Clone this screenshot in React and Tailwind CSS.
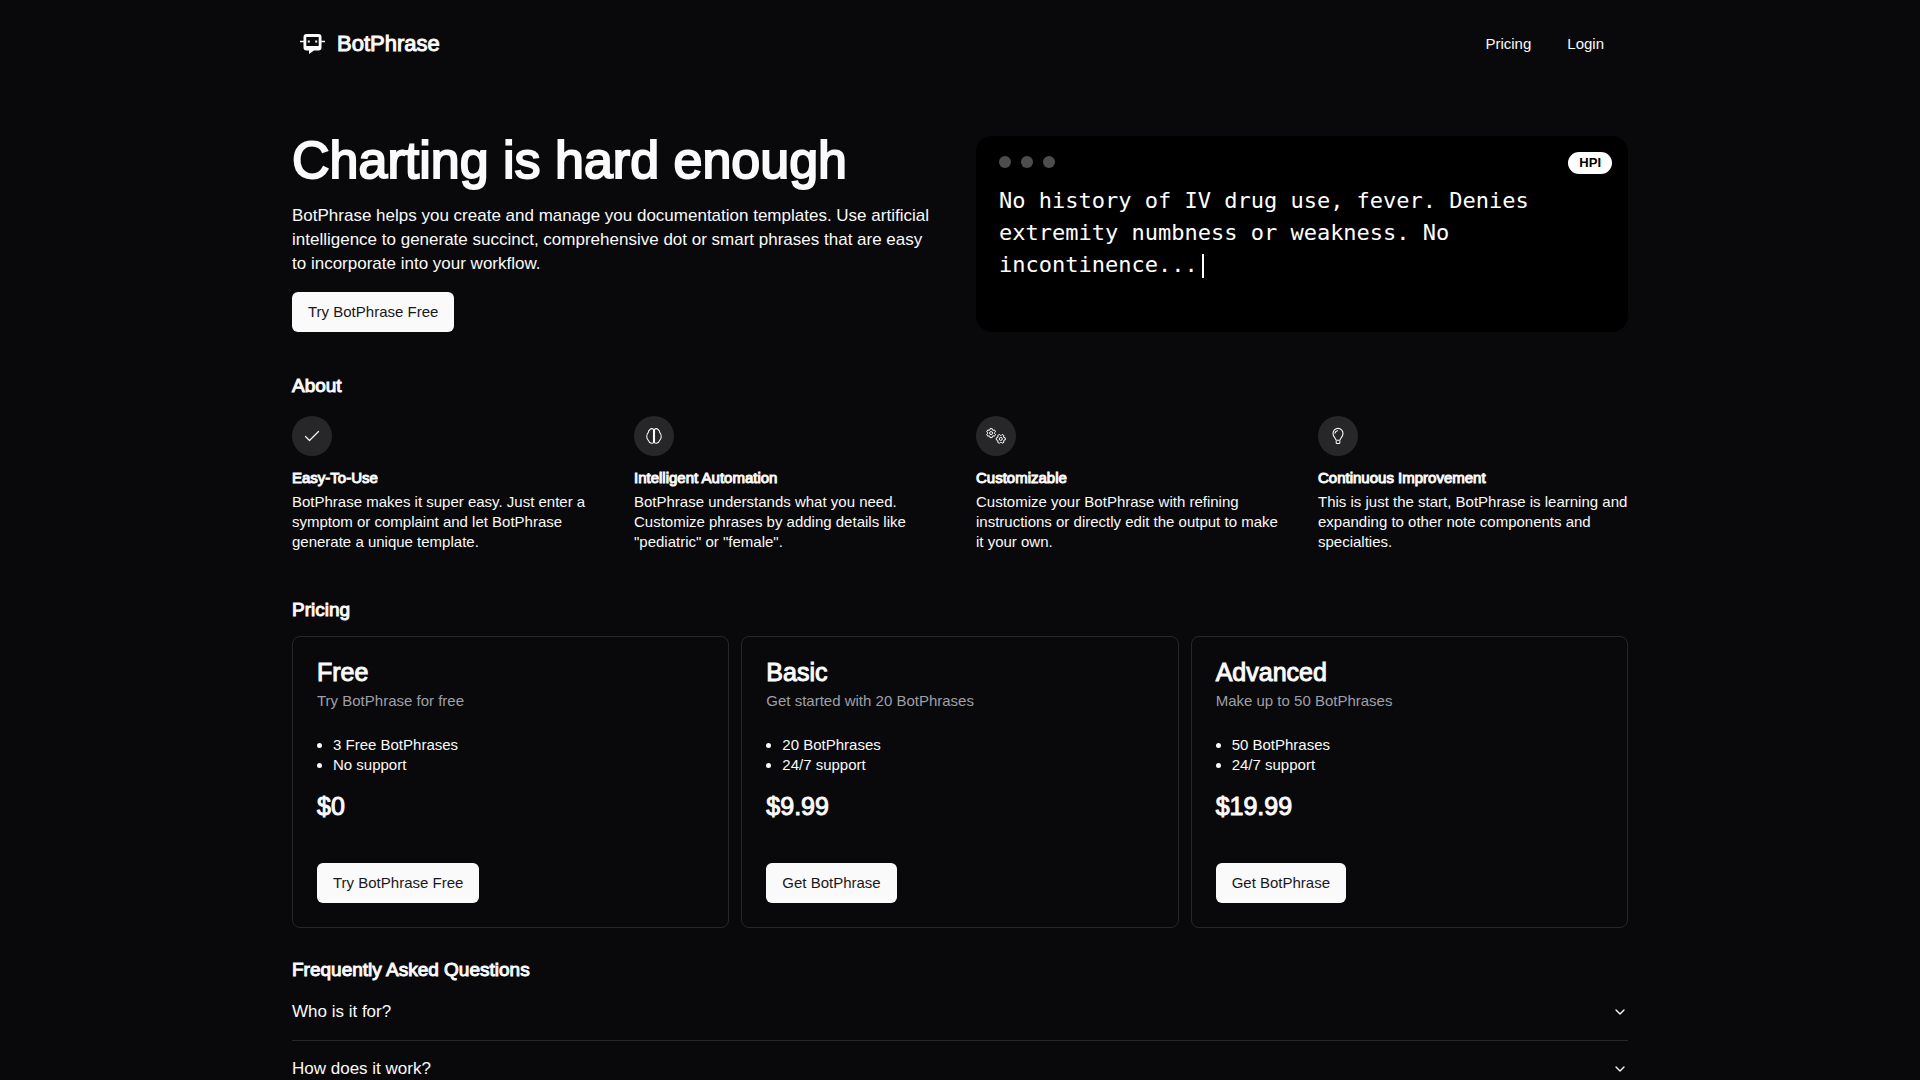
import { ChevronDown } from "lucide-react";

const CheckIcon = () => (
  <svg
    viewBox="0 0 20 20"
    className="size-5"
    fill="none"
    stroke="currentColor"
    strokeWidth="1.200"
    strokeLinecap="round"
    strokeLinejoin="round"
    aria-hidden="true"
  >
    <path d="M3.500 10.500 7.500 14.500 16.500 5.500" />
  </svg>
);

const BrainIcon = () => (
  <svg
    viewBox="0 0 20 20"
    className="size-5"
    fill="none"
    stroke="currentColor"
    strokeWidth="1.100"
    strokeLinejoin="round"
    aria-hidden="true"
  >
    <path d="M9.500 3.500C8.700 2.300 6.900 2.300 6 3.500 4.900 4.200 4.300 5.400 4.200 6.700 2.900 7.900 2.500 9.500 2.800 11c.1 1.400.7 2.500 1.600 3.300.5 1.700 1.800 2.800 3.200 3 1 .1 1.600-.2 1.900-.8Z" />
    <path d="M10.500 3.500c.8-1.200 2.600-1.200 3.500 0 1.100.7 1.700 1.900 1.800 3.200 1.300 1.200 1.700 2.800 1.400 4.300-.1 1.400-.7 2.500-1.600 3.300-.5 1.700-1.800 2.800-3.200 3-1 .1-1.600-.2-1.900-.8Z" />
  </svg>
);

const BulbIcon = () => (
  <svg
    viewBox="0 0 20 20"
    className="size-5"
    fill="none"
    stroke="currentColor"
    strokeWidth="1.100"
    strokeLinecap="round"
    strokeLinejoin="round"
    aria-hidden="true"
  >
    <path d="M8 14.300C7.800 12.300 5 10.600 5 7.400a5 5 0 0 1 10 0c0 3.200-2.800 4.900-3 6.900Z" />
    <path d="M7 7.200A3 3 0 0 1 9.500 4.700M8.200 15.500v1.200c0 .5.300.8.800.8h2c.5 0 .8-.3.8-.8v-1.200" />
  </svg>
);

const gearPoints = (cx, cy, turn) =>
  Array.from({ length: 6 }, (_, tooth) =>
    [
      [-25, 3.3],
      [-14, 4.6],
      [14, 4.6],
      [25, 3.3],
    ].map(([offset, radius]) => {
      const angle = ((tooth * 60 + turn + offset) * Math.PI) / 180;
      return `${cx + radius * Math.sin(angle)},${cy - radius * Math.cos(angle)}`;
    })
  )
    .flat()
    .join(" ");

const GearsIcon = () => (
  <svg
    viewBox="0 0 20 16"
    className="h-4 w-5"
    fill="none"
    stroke="currentColor"
    strokeLinejoin="round"
    aria-hidden="true"
  >
    <polygon points={gearPoints(5.1, 5.1, 0)} />
    <circle cx="5.100" cy="5.100" r="1.500" />
    <polygon points={gearPoints(14.8, 10.9, 30)} />
    <circle cx="14.800" cy="10.900" r="1.500" />
  </svg>
);

const navLinks = [
  { label: "Pricing", href: "#pricing" },
  { label: "Login", href: "#login" },
];

const features = [
  {
    title: "Easy-To-Use",
    icon: CheckIcon,
    text: "BotPhrase makes it super easy. Just enter a symptom or complaint and let BotPhrase generate a unique template.",
  },
  {
    title: "Intelligent Automation",
    icon: BrainIcon,
    text: 'BotPhrase understands what you need. Customize phrases by adding details like "pediatric" or "female".',
  },
  {
    title: "Customizable",
    icon: GearsIcon,
    text: "Customize your BotPhrase with refining instructions or directly edit the output to make it your own.",
  },
  {
    title: "Continuous Improvement",
    icon: BulbIcon,
    text: "This is just the start, BotPhrase is learning and expanding to other note components and specialties.",
  },
];

const plans = [
  {
    name: "Free",
    tagline: "Try BotPhrase for free",
    perks: ["3 Free BotPhrases", "No support"],
    price: "$0",
    cta: "Try BotPhrase Free",
  },
  {
    name: "Basic",
    tagline: "Get started with 20 BotPhrases",
    perks: ["20 BotPhrases", "24/7 support"],
    price: "$9.99",
    cta: "Get BotPhrase",
  },
  {
    name: "Advanced",
    tagline: "Make up to 50 BotPhrases",
    perks: ["50 BotPhrases", "24/7 support"],
    price: "$19.99",
    cta: "Get BotPhrase",
  },
];

const questions = ["Who is it for?", "How does it work?"];

const Logo = () => (
  <svg viewBox="0 0 25 20" className="h-5 w-[25px]" fill="currentColor" aria-hidden="true">
    <path
      fillRule="evenodd"
      d="M6.500 0h12a3 3 0 0 1 3 3v3.800H25v1.400h-3.500V13.500a3 3 0 0 1-3 3h-4.500L9 20v-3.500H6.500a3 3 0 0 1-3-3V8.200H0V6.800h3.500V3A3 3 0 0 1 6.500 0Zm-.2 3v9h12.400V3Z"
    />
    <path d="M7.800 6.600h2v2h-2zM15.200 6.600h2v2h-2z" />
  </svg>
);

const Button = ({ children }) => (
  <button
    type="button"
    className="h-10 rounded-md bg-zinc-50 px-4 text-[15px] leading-5 text-zinc-900 hover:bg-zinc-200"
  >
    {children}
  </button>
);

const SectionTitle = ({ children }) => (
  <h2 className="text-[19px] leading-7 [-webkit-text-stroke:1px]">{children}</h2>
);

const Header = () => (
  <header className="flex h-22 items-center justify-between pr-6 pl-2">
    <a href="#home" className="flex items-center gap-3">
      <Logo />
      <span className="text-[22px] leading-7 [-webkit-text-stroke:1px]">BotPhrase</span>
    </a>
    <nav className="flex gap-9">
      {navLinks.map((link) => (
        <a key={link.label} href={link.href} className="text-[15px] leading-5 hover:underline">
          {link.label}
        </a>
      ))}
    </nav>
  </header>
);

const Terminal = () => (
  <div className="relative rounded-2xl bg-black px-[23px] pt-5 pb-4">
    <div className="flex gap-[10px]">
      <span className="size-3 rounded-full bg-[#4d4d4d]" />
      <span className="size-3 rounded-full bg-[#4d4d4d]" />
      <span className="size-3 rounded-full bg-[#4d4d4d]" />
    </div>
    <span className="absolute top-4 right-4 rounded-full bg-white px-[11px] text-[13px] leading-[22px] font-bold text-black">
      HPI
    </span>
    <p className="mt-[17px] font-['DejaVu_Sans_Mono',monospace] text-[22px] leading-8 text-white">
      No history of IV drug use, fever. Denies extremity numbness or weakness. No incontinence...
      <span className="ml-1 inline-block h-6 w-[2px] bg-white align-middle" />
    </p>
  </div>
);

const Hero = () => (
  <section className="mt-12 grid gap-8 lg:grid-cols-2">
    <div>
      <h1 className="mb-5 text-[52px] leading-12 [-webkit-text-stroke:2px]">
        Charting is hard enough
      </h1>
      <p className="mb-4 pr-2 text-[17px] leading-6">
        BotPhrase helps you create and manage you documentation templates. Use artificial
        intelligence to generate succinct, comprehensive dot or smart phrases that are easy to
        incorporate into your workflow.
      </p>
      <Button>Try BotPhrase Free</Button>
    </div>
    <Terminal />
  </section>
);

const About = () => (
  <section className="mt-10">
    <SectionTitle>About</SectionTitle>
    <div className="mt-4 grid gap-8 md:grid-cols-2 lg:grid-cols-4">
      {features.map(({ title, icon: Icon, text }) => (
        <div key={title}>
          <div className="mb-3 flex size-10 items-center justify-center rounded-full bg-zinc-800">
            <Icon />
          </div>
          <h3 className="mb-1 text-[15px] leading-5 [-webkit-text-stroke:1px]">{title}</h3>
          <p className="text-[15px] leading-5">{text}</p>
        </div>
      ))}
    </div>
  </section>
);

const PlanCard = ({ plan }) => (
  <div className="rounded-lg border border-zinc-800 p-6">
    <h3 className="text-[25px] leading-[22px] [-webkit-text-stroke:1px]">{plan.name}</h3>
    <p className="mt-2 text-[15px] leading-5 text-zinc-400">{plan.tagline}</p>
    <ul className="mt-6 list-disc pl-4 text-[15px] leading-5">
      {plan.perks.map((perk) => (
        <li key={perk}>{perk}</li>
      ))}
    </ul>
    <p className="mt-4 mb-[42px] text-[25px] leading-[30px] [-webkit-text-stroke:1px]">
      {plan.price}
    </p>
    <Button>{plan.cta}</Button>
  </div>
);

const Pricing = () => (
  <section id="pricing" className="mt-11">
    <SectionTitle>Pricing</SectionTitle>
    <div className="mt-3 grid gap-3 md:grid-cols-3">
      {plans.map((plan) => (
        <PlanCard key={plan.name} plan={plan} />
      ))}
    </div>
  </section>
);

const Faq = () => (
  <section className="mt-7">
    <SectionTitle>Frequently Asked Questions</SectionTitle>
    {questions.map((question) => (
      <div key={question} className="border-b border-zinc-800">
        <button
          type="button"
          aria-expanded="false"
          className="flex w-full items-center justify-between py-4 text-left text-[17px] leading-6 hover:underline"
        >
          {question}
          <ChevronDown className="size-4" />
        </button>
      </div>
    ))}
  </section>
);

const App = () => (
  <div className="min-h-screen bg-zinc-950 font-['Liberation_Sans',Arial,sans-serif] text-zinc-50">
    <div className="mx-auto max-w-[1400px] px-8">
      <Header />
      <main>
        <Hero />
        <About />
        <Pricing />
        <Faq />
      </main>
    </div>
  </div>
);

export default App;
